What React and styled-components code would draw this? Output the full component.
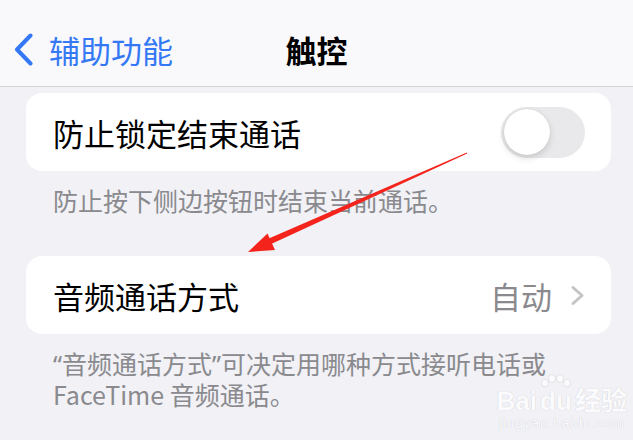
import React from "react";
import styled, { createGlobalStyle } from "styled-components";

const GlobalStyle = createGlobalStyle`
  html, body {
    margin: 0;
    padding: 0;
    background: #f1f1f6;
  }
  body {
    font-family: "Noto Sans CJK SC", "Noto Sans", sans-serif;
  }
`;

const Page = styled.div`
  position: relative;
  width: 633px;
  height: 440px;
  overflow: hidden;
  background: #f1f1f6;
`;

const NavBar = styled.header`
  box-sizing: border-box;
  height: 87px;
  padding-top: 12px;
  display: grid;
  grid-template-columns: 1fr auto 1fr;
  align-items: center;
  background: #f9f9fb;
  border-bottom: 1px solid #d4d4d8;
`;

const BackButton = styled.div`
  display: flex;
  align-items: center;
  gap: 16px;
  padding-left: 14px;
  color: #3478f6;
  font-size: 31px;
  line-height: 1;
`;

const Title = styled.h1`
  margin: 0;
  font-size: 31px;
  font-weight: 700;
  line-height: 1;
  color: #000;
`;

const Content = styled.main`
  padding: 6px 22px 0 26px;
`;

const Section = styled.section`
  margin-top: ${(p) => p.$gap || 0}px;
`;

const Card = styled.div`
  box-sizing: border-box;
  height: 78px;
  padding: 0 26px 0 27px;
  display: flex;
  align-items: center;
  justify-content: space-between;
  background: #fff;
  border-radius: 16px;
`;

const Label = styled.span`
  font-size: 31px;
  line-height: 1;
  color: #000;
`;

const Detail = styled.div`
  display: flex;
  align-items: center;
  gap: 18px;
  color: #8a8a8e;
  font-size: 31px;
  line-height: 1;
`;

const Toggle = styled.div`
  position: relative;
  width: 84px;
  height: 51px;
  border-radius: 26px;
  background: #e9e9eb;
`;

const Knob = styled.div`
  position: absolute;
  top: 2.5px;
  left: 2.5px;
  width: 46px;
  height: 46px;
  border-radius: 50%;
  background: #fff;
  box-shadow: 0 3px 7px rgba(0, 0, 0, 0.14), 0 0 1px rgba(0, 0, 0, 0.16);
`;

const Footer = styled.p`
  margin: 14px 0 0;
  padding: 0 27px;
  font-size: 25px;
  line-height: 30px;
  color: #8a8a8e;
`;

const Quote = styled.span`
  font-family: "Noto Sans", sans-serif;
`;

const Arrow = styled.svg`
  position: absolute;
  left: 0;
  top: 0;
  pointer-events: none;
`;

const Watermark = styled.div`
  position: absolute;
  right: 6px;
  bottom: 9px;
  display: flex;
  flex-direction: column;
  align-items: center;
  white-space: nowrap;
  color: #fbfbfd;
  font-family: "Liberation Sans", "Noto Sans CJK SC", sans-serif;
  text-shadow: 0 0 1px rgba(0, 0, 0, 0.2);
`;

const MarkTop = styled.div`
  display: flex;
  align-items: flex-end;
  gap: 2px;
  font-size: 26px;
  font-weight: 700;
  line-height: 27px;
`;

const MarkUrl = styled.div`
  font-size: 14px;
  line-height: 16px;
  letter-spacing: 0.8px;
`;

const PawBox = styled.span`
  display: inline-flex;
  flex-direction: column;
  align-items: center;
`;

const BackChevron = () => (
  <svg width="19" height="33" viewBox="0 0 19 33">
    <path
      d="M16.5 2.5 L3 16.5 L16.5 30.5"
      fill="none"
      stroke="#3478f6"
      strokeWidth="4"
      strokeLinecap="round"
      strokeLinejoin="round"
    />
  </svg>
);

const Chevron = () => (
  <svg width="15" height="21" viewBox="0 0 15 21">
    <path
      d="M3 2.5 L12 10.5 L3 18.5"
      fill="none"
      stroke="#c4c4c7"
      strokeWidth="3"
      strokeLinecap="round"
      strokeLinejoin="round"
    />
  </svg>
);

const Paw = () => (
  <svg width="34" height="14" viewBox="0 0 34 14">
    <g fill="#fbfbfd" stroke="#e2e2e6" strokeWidth="1">
      <ellipse cx="6" cy="9" rx="3.5" ry="4" />
      <ellipse cx="13" cy="4.5" rx="3.5" ry="4" />
      <ellipse cx="21" cy="4.5" rx="3.5" ry="4" />
      <ellipse cx="28" cy="9" rx="3.5" ry="4" />
    </g>
  </svg>
);

export default function App() {
  return (
    <>
      <GlobalStyle />
      <Page>
        <NavBar>
          <BackButton>
            <BackChevron />
            辅助功能
          </BackButton>
          <Title>触控</Title>
          <div />
        </NavBar>
        <Content>
          <Section>
            <Card>
              <Label>防止锁定结束通话</Label>
              <Toggle>
                <Knob />
              </Toggle>
            </Card>
            <Footer>防止按下侧边按钮时结束当前通话。</Footer>
          </Section>
          <Section $gap={41}>
            <Card>
              <Label>音频通话方式</Label>
              <Detail>
                自动
                <Chevron />
              </Detail>
            </Card>
            <Footer>
              <Quote>“</Quote>音频通话方式<Quote>”</Quote>可决定用哪种方式接听电话或 FaceTime 音频通话。
            </Footer>
          </Section>
        </Content>
        <Arrow width="633" height="440" viewBox="0 0 633 440">
          <polygon points="467.2,153.4 466.8,152.6 268.8,238.5 271.2,243.9" fill="#f4231b" />
          <polygon points="248,252 267.5,233.5 275,250" fill="#f4231b" />
        </Arrow>
        <Watermark>
          <MarkTop>
            Bai
            <PawBox>
              <Paw />
              du
            </PawBox>
            经验
          </MarkTop>
          <MarkUrl>jingyan.baidu.com</MarkUrl>
        </Watermark>
      </Page>
    </>
  );
}
